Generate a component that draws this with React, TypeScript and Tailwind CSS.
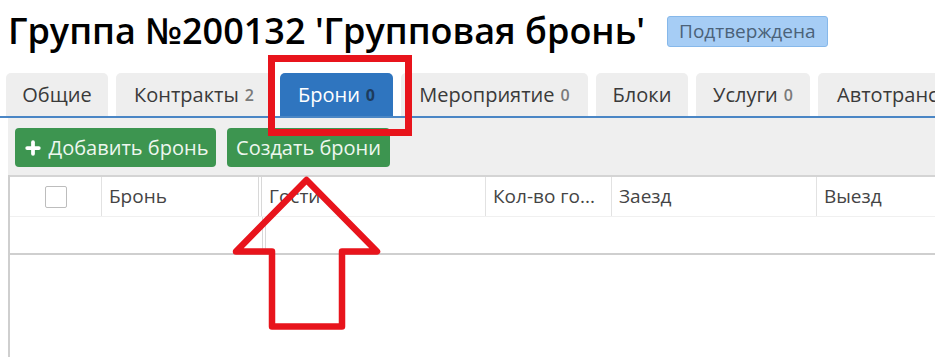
import { Plus } from 'lucide-react';

const tabs = [
  { label: 'Общие', count: null, w: 'w-[102px]' },
  { label: 'Контракты', count: '2', w: 'w-[156px]' },
  { label: 'Брони', count: '0', w: 'w-[113px]', active: true },
  { label: 'Мероприятие', count: '0', w: 'w-[187px]' },
  { label: 'Блоки', count: null, w: 'w-[92px]' },
  { label: 'Услуги', count: '0', w: 'w-[114px]' },
  { label: 'Автотранспорт', count: '0', w: 'w-[200px]' },
];

const columns = [
  { label: 'Бронь', w: 'w-[160px]' },
  { label: 'Гости', w: 'w-[224px]' },
  { label: 'Кол-во го...', w: 'w-[126px]' },
  { label: 'Заезд', w: 'w-[205px]' },
  { label: 'Выезд', w: 'w-[200px]' },
];

export default function App() {
  return (
    <div className="relative w-[935px] h-[357px] overflow-hidden bg-white font-['Open_Sans',sans-serif]">
      {/* заголовок */}
      <div className="flex items-center pl-2 pt-[13px]">
        <h1 className="text-[36px] leading-[36px] font-semibold text-black whitespace-nowrap">
          Группа №200132 'Групповая бронь'
        </h1>
        <span className="ml-[22px] h-[31px] px-[11px] flex items-center rounded-[3px] border border-[#86b8ea] bg-[#a6cdf5] text-[19px] text-[#4b6279]">
          Подтверждена
        </span>
      </div>

      {/* вкладки */}
      <div className="mt-[24px] flex gap-2 pl-[6px] border-b-2 border-[#4a86c5] whitespace-nowrap">
        {tabs.map((t) => (
          <div
            key={t.label}
            className={`${t.w} shrink-0 h-[43px] flex items-center justify-center rounded-t-[5px] text-[20px] ${
              t.active ? 'bg-[#2f75bf] text-white' : 'bg-[#eeeeee] text-[#3a3a3a]'
            }`}
          >
            {t.label}
            {t.count && (
              <span
                className={`ml-[6px] text-[16px] ${
                  t.active ? 'font-bold text-[#1d3b5c]' : 'font-semibold text-[#7a7a7a]'
                }`}
              >
                {t.count}
              </span>
            )}
          </div>
        ))}
      </div>

      {/* панель кнопок */}
      <div className="ml-2 h-[57px] bg-[#efefef] flex items-start gap-[11px] pl-[7px] pt-[10px]">
        <button className="h-[39px] w-[201px] flex items-center justify-center gap-[6px] rounded-[4px] bg-[#3d9550] text-[20px] text-[#eef7ef]">
          <Plus size={20} strokeWidth={4.5} className="text-white" />
          Добавить бронь
        </button>
        <button className="h-[39px] w-[163px] flex items-center justify-center rounded-[4px] bg-[#3d9550] text-[20px] text-[#eef7ef]">
          Создать брони
        </button>
      </div>

      {/* таблица */}
      <div className="ml-2 h-[200px] border-l-2 border-[#cfcfcf]">
        <div className="flex h-[42px] border-t-2 border-[#d4d4d4] border-b border-b-[#f0f0f0] text-[19px] text-[#444] whitespace-nowrap">
          <div className="w-[92px] shrink-0 flex items-center justify-center border-r border-[#e2e2e2]">
            <div className="w-[22px] h-[22px] border border-[#bdbdbd] rounded-[2px] bg-white" />
          </div>
          {columns.map((c, i) => (
            <div
              key={c.label}
              className={`${c.w} shrink-0 flex items-center px-[7px] ${
                i === 0 ? 'border-r-[4px] border-double border-[#d8d8d8]' : 'border-r border-[#e2e2e2]'
              }`}
            >
              {c.label}
            </div>
          ))}
        </div>
        <div className="flex h-[38px] border-b-2 border-[#cfcfcf]">
          <div className="w-[252px] shrink-0" />
          <div className="w-[4px] border-r-[4px] border-double border-[#d8d8d8]" />
        </div>
      </div>

      {/* пометки поверх скриншота */}
      <svg className="absolute left-0 top-0 pointer-events-none" width="935" height="357">
        <rect x="271.5" y="58.5" width="137" height="74" fill="none" stroke="#e8141c" strokeWidth="7" />
        <polygon
          points="306.5,180 377,251.5 342,251.5 342,326.5 272,326.5 272,251.5 236,251.5"
          fill="none"
          stroke="#e8141c"
          strokeWidth="6.5"
          strokeLinejoin="round"
        />
      </svg>
    </div>
  );
}
